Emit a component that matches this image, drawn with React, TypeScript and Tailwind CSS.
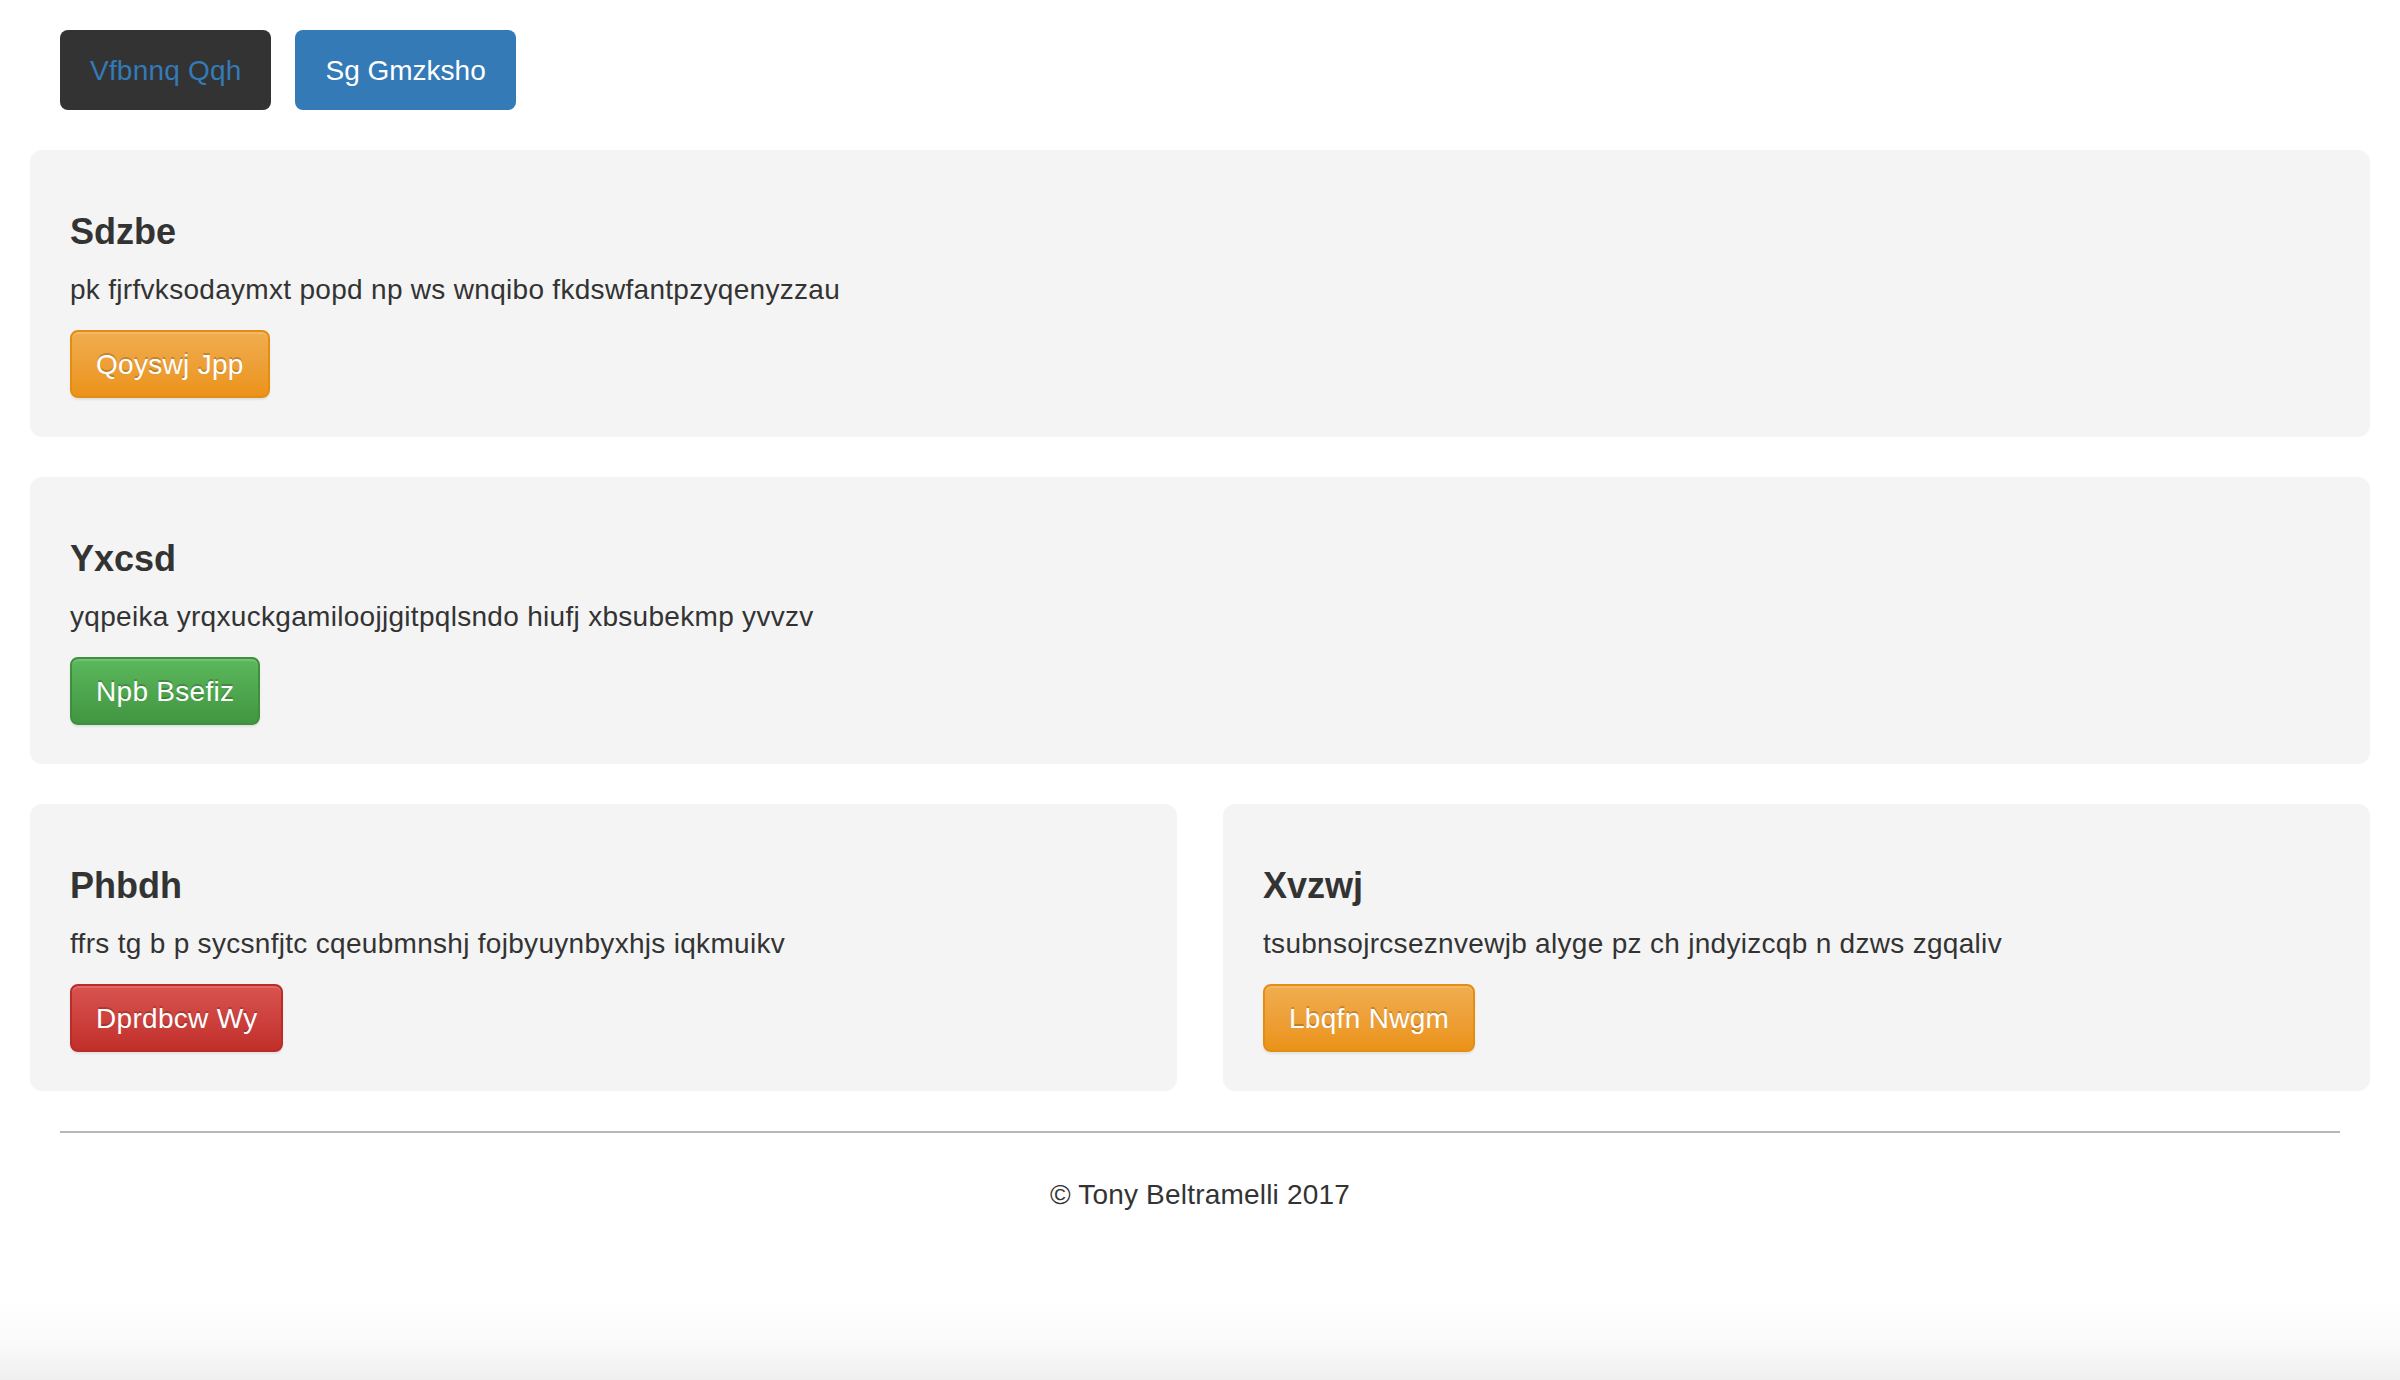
import React from 'react';

type Tone = 'warning' | 'success' | 'danger';

const toneClass: Record<Tone, string> = {
  warning: 'bg-linear-to-b from-[#f0ad4e] to-[#eb9316] border-[#e38d13]',
  success: 'bg-linear-to-b from-[#5cb85c] to-[#419641] border-[#3e8f3e]',
  danger: 'bg-linear-to-b from-[#d9534f] to-[#c12e2a] border-[#b92c28]',
};

const ActionButton: React.FC<{ tone: Tone; label: string }> = ({ tone, label }) => (
  <a
    href="#"
    className={`inline-block pt-[13px] pb-[11px] px-[24px] border-2 rounded-[8px] text-white text-[28px] leading-[40px] tracking-[0.3px] whitespace-nowrap [text-shadow:0_-2px_0_rgba(0,0,0,0.2)] shadow-[inset_0_2px_0_rgba(255,255,255,0.15),0_2px_2px_rgba(0,0,0,0.075)] ${toneClass[tone]}`}
  >
    {label}
  </a>
);

const Card: React.FC<{ title: string; text: string; tone: Tone; button: string }> = ({
  title,
  text,
  tone,
  button,
}) => (
  <div className="bg-[#f4f4f4] rounded-[12px] px-[40px] pt-[40px] pb-[39px]">
    <h4 className="mt-[22px] mb-[18px] text-[36px] leading-[40px] font-bold text-[#333]">{title}</h4>
    <p className="mb-[20px] text-[28px] leading-[40px] tracking-[0.3px]">{text}</p>
    <ActionButton tone={tone} label={button} />
  </div>
);

const App: React.FC = () => {
  return (
    <div className="min-h-[1380px] flex flex-col bg-white text-[#333] font-['Liberation_Sans',Arial,sans-serif]">
      <div className="px-[30px]">
        {/* Header pills */}
        <nav className="pt-[30px] pl-[30px] flex gap-[24px]">
          <a href="#" className="block pt-[21px] pb-[19px] px-[30px] rounded-[8px] bg-[#333333] text-[#337ab7] text-[28px] leading-[40px] tracking-[0.2px]">
            Vfbnnq Qqh
          </a>
          <a href="#" className="block pt-[21px] pb-[19px] px-[30px] rounded-[8px] bg-[#337ab7] text-white text-[28px] leading-[40px]">
            Sg Gmzksho
          </a>
        </nav>

        <div className="mt-[40px] flex flex-col gap-[40px]">
          <Card
            title="Sdzbe"
            text="pk fjrfvksodaymxt popd np ws wnqibo fkdswfantpzyqenyzzau"
            tone="warning"
            button="Qoyswj Jpp"
          />
          <Card
            title="Yxcsd"
            text="yqpeika yrqxuckgamiloojjgitpqlsndo hiufj xbsubekmp yvvzv"
            tone="success"
            button="Npb Bsefiz"
          />
          <div className="grid grid-cols-2 gap-[46px]">
            <Card
              title="Phbdh"
              text="ffrs tg b p sycsnfjtc cqeubmnshj fojbyuynbyxhjs iqkmuikv"
              tone="danger"
              button="Dprdbcw Wy"
            />
            <Card
              title="Xvzwj"
              text="tsubnsojrcseznvewjb alyge pz ch jndyizcqb n dzws zgqaliv"
              tone="warning"
              button="Lbqfn Nwgm"
            />
          </div>
        </div>

        {/* Footer */}
        <footer className="mx-[30px] mt-[40px] border-t-2 border-[#b7b7b7] pt-[42px]">
          <p className="text-center text-[28px] leading-[40px] tracking-[0.2px]">© Tony Beltramelli 2017</p>
        </footer>
      </div>
      <div className="flex-1" />
      <div className="h-[80px] bg-linear-to-b from-white via-[#fbfbfb] to-[#efefef]" />
    </div>
  );
};

export default App;
